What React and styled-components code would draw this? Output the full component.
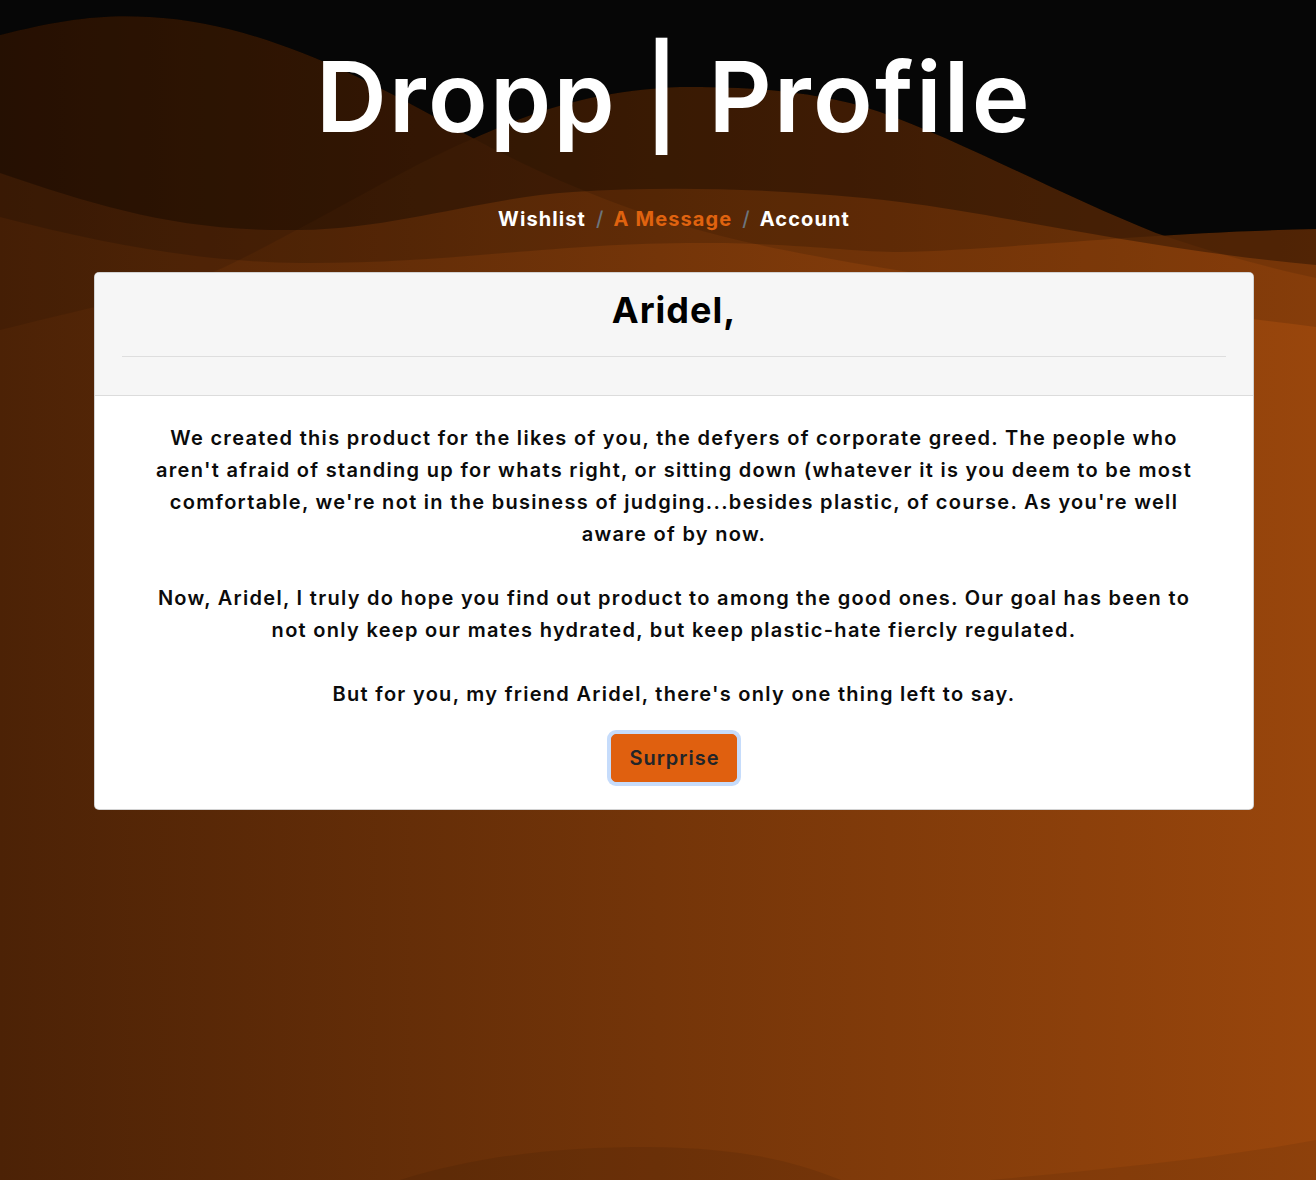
import React from "react";
import styled, { createGlobalStyle } from "styled-components";

const GlobalStyle = createGlobalStyle`
  html, body {
    margin: 0;
    padding: 0;
    background: #060606;
  }
  * {
    box-sizing: border-box;
  }
`;

const Page = styled.div`
  position: relative;
  min-height: 100vh;
  overflow: hidden;
  background: linear-gradient(90deg, #4c2206 0%, #743509 50%, #99460c 100%);
  font-family: "Inter", "Liberation Sans", sans-serif;
`;

const Waves = styled.svg`
  position: absolute;
  top: 0;
  left: 0;
  width: 100%;
  height: 100%;
  z-index: 0;
`;

const Content = styled.main`
  position: relative;
  z-index: 1;
  display: flex;
  flex-direction: column;
  align-items: center;
  padding: 38px 0 0 32px;
`;

const Title = styled.h1`
  margin: 0;
  color: #fff;
  font-size: 98px;
  font-weight: 600;
  line-height: 1.2;
  letter-spacing: 2.3px;
`;

const Crumbs = styled.nav`
  display: flex;
  align-items: center;
  margin-top: 48px;
  font-size: 20px;
  font-weight: 700;
  line-height: 1.5;
  letter-spacing: 1.1px;
`;

const Crumb = styled.span`
  color: ${(p) => (p.$active ? "#e0630f" : "#ffffff")};
`;

const Sep = styled.span`
  color: #6c757d;
  font-weight: 500;
  padding: 0 9px 0 10px;
`;

const Card = styled.section`
  width: 1160px;
  margin-top: 38px;
  background: #fff;
  border: 1px solid rgba(0, 0, 0, 0.175);
  border-radius: 5px;
  overflow: hidden;
`;

const CardHeader = styled.header`
  background: #f6f6f6;
  border-bottom: 1px solid #dcdcdc;
  padding: 16px 27px 38px;
  text-align: center;
`;

const Name = styled.h2`
  margin: 0 0 24px;
  font-size: 36px;
  font-weight: 700;
  line-height: 1.2;
  letter-spacing: 1px;
  color: #000;
`;

const Rule = styled.hr`
  margin: 0;
  border: 0;
  border-top: 1px solid #dedede;
`;

const CardBody = styled.div`
  display: flex;
  flex-direction: column;
  align-items: center;
  padding: 26px 20px 27px;
  text-align: center;
`;

const Text = styled.p`
  margin: 0 0 32px;
  font-size: 20px;
  font-weight: 600;
  line-height: 32px;
  letter-spacing: 1.3px;
  color: #0b0b0b;

  &:last-of-type {
    margin-bottom: 24px;
  }
`;

const Button = styled.button`
  font-family: inherit;
  font-size: 20px;
  font-weight: 600;
  line-height: 30px;
  letter-spacing: 1px;
  color: #212529;
  background: #e0600f;
  border: 1px solid #e0600f;
  border-radius: 5px;
  padding: 8px 16px 8px 17px;
  box-shadow: 0 0 0 4px #c6dcfb;
  cursor: pointer;
`;

const curves = {
  c1: "M0,35 C60,20 100,14 150,17 C250,22 350,70 440,120 C520,165 620,215 760,245 C900,275 1100,300 1316,327",
  c2: "M0,173 C100,207 180,232 300,230 C400,228 480,198 573,192 C680,185 800,190 900,202 C1000,214 1150,250 1316,265",
  c3: "M0,330 C100,305 180,290 233,263 C330,215 400,170 470,140 C540,108 600,90 680,87 C780,86 840,98 880,112 C960,140 1060,195 1156,233 C1220,255 1270,268 1316,278",
  c4: "M0,217 C100,243 200,262 300,263 C450,264 550,243 700,243 C800,243 850,252 900,252 C1000,250 1150,232 1316,229",
};

const top = (d) => `${d} L1316,0 L0,0 Z`;

const Background = () => (
  <Waves viewBox="0 0 1316 1180" preserveAspectRatio="none">
    <defs>
      {Object.entries(curves).map(([k, d]) => (
        <clipPath id={`clip-${k}`} key={k}>
          <path d={top(d)} />
        </clipPath>
      ))}
    </defs>
    <path d={top(curves.c1)} fill="#000" fillOpacity="0.12" />
    <path d={top(curves.c2)} fill="#000" fillOpacity="0.32" />
    <path d={top(curves.c3)} fill="#000" fillOpacity="0.1" />
    <path d={top(curves.c4)} fill="#000" fillOpacity="0.16" />
    <g clipPath="url(#clip-c1)">
      <g clipPath="url(#clip-c2)">
        <g clipPath="url(#clip-c3)">
          <g clipPath="url(#clip-c4)">
            <rect x="0" y="0" width="1316" height="400" fill="#060606" />
          </g>
        </g>
      </g>
    </g>
    <path d="M400,1180 C480,1155 560,1147 650,1147 C740,1148 790,1160 841,1180 Z" fill="#000" fillOpacity="0.08" />
    <path d="M990,1180 C1100,1170 1220,1158 1316,1140 L1316,1180 Z" fill="#000" fillOpacity="0.07" />
  </Waves>
);

export default function App() {
  return (
    <>
      <GlobalStyle />
      <Page>
        <Background />
        <Content>
          <Title>Dropp | Profile</Title>
          <Crumbs>
            <Crumb>Wishlist</Crumb>
            <Sep>/</Sep>
            <Crumb $active>A Message</Crumb>
            <Sep>/</Sep>
            <Crumb>Account</Crumb>
          </Crumbs>
          <Card>
            <CardHeader>
              <Name>Aridel,</Name>
              <Rule />
            </CardHeader>
            <CardBody>
              <Text>
                We created this product for the likes of you, the defyers of corporate greed. The people who
                <br />
                aren't afraid of standing up for whats right, or sitting down (whatever it is you deem to be most
                <br />
                comfortable, we're not in the business of judging...besides plastic, of course. As you're well
                <br />
                aware of by now.
              </Text>
              <Text>
                Now, Aridel, I truly do hope you find out product to among the good ones. Our goal has been to
                <br />
                not only keep our mates hydrated, but keep plastic-hate fiercly regulated.
              </Text>
              <Text>But for you, my friend Aridel, there's only one thing left to say.</Text>
              <Button>Surprise</Button>
            </CardBody>
          </Card>
        </Content>
      </Page>
    </>
  );
}
